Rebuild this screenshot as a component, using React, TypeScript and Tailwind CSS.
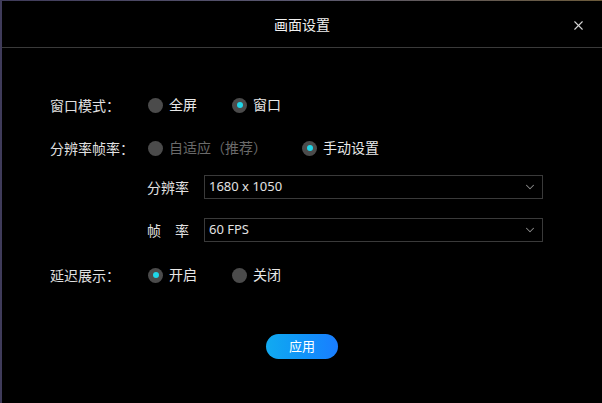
import { ChevronDown, X } from 'lucide-react';

const font = { fontFamily: '"Noto Sans", "Noto Sans CJK SC", sans-serif' };

function Radio({ checked, disabled, label, width }: { checked?: boolean; disabled?: boolean; label: string; width: string }) {
  return (
    <div className={`flex items-center ${width}`}>
      <span className="flex h-[15px] w-[15px] items-center justify-center rounded-full bg-[#4b4b4b]">
        {checked && <span className="h-[6px] w-[6px] rounded-full bg-[#1fd6e8]" />}
      </span>
      <span className={`ml-[6px] text-[14px] leading-none ${disabled ? 'text-[#6a6a6a]' : 'text-[#e8e8e8]'}`}>{label}</span>
    </div>
  );
}

function Select({ value }: { value: string }) {
  return (
    <div className="flex h-[24px] w-[339px] items-center justify-between border border-[#3a3a3a] bg-black pl-[4px] pr-[5px]">
      <span className="text-[13px] text-[#e2e2e2]">{value}</span>
      <ChevronDown size={14} strokeWidth={1.75} className="text-[#8c8c8c]" />
    </div>
  );
}

export default function App() {
  return (
    <div className="h-[403px] w-[602px] bg-gradient-to-r from-[#3f3b5a] via-[#5a5870] to-[#6b5a3a] pl-[2px] pt-px" style={font}>
      <div className="flex h-[402px] flex-col bg-black">
        {/* Header */}
        <div className="relative flex h-[47px] items-center justify-center border-b border-[#3a3a3a]">
          <span className="text-[14px] text-[#f0f0f0]">画面设置</span>
          <X size={15} strokeWidth={1.75} className="absolute right-[16px] top-[17px] text-[#d4d4d4]" />
        </div>

        <div className="flex flex-col pl-[48px] pt-[47px]">
          <div className="flex h-[20px] items-center">
            <span className="w-[98px] text-[14px] text-[#e0e0e0]">窗口模式：</span>
            <Radio label="全屏" width="w-[84px]" />
            <Radio checked label="窗口" width="w-[84px]" />
          </div>

          <div className="mt-[23px] flex h-[20px] items-center">
            <span className="w-[98px] text-[14px] text-[#e0e0e0]">分辨率帧率：</span>
            <Radio disabled label="自适应（推荐）" width="w-[154px]" />
            <Radio checked label="手动设置" width="w-[120px]" />
          </div>

          <div className="mt-[17px] flex items-center pl-[97px]">
            <span className="w-[57px] text-[14px] text-[#e0e0e0]">分辨率</span>
            <Select value="1680 x 1050" />
          </div>

          <div className="mt-[19px] flex items-center pl-[97px]">
            <span className="w-[57px] text-[14px] text-[#e0e0e0]">
              帧<span className="ml-[14px]">率</span>
            </span>
            <Select value="60 FPS" />
          </div>

          <div className="mt-[23px] flex h-[20px] items-center">
            <span className="w-[98px] text-[14px] text-[#e0e0e0]">延迟展示：</span>
            <Radio checked label="开启" width="w-[84px]" />
            <Radio label="关闭" width="w-[84px]" />
          </div>
        </div>

        <div className="mt-[49px] flex justify-center">
          <button className="h-[25px] w-[72px] rounded-full bg-gradient-to-r from-[#12aaf0] to-[#1a7dff] text-[13px] text-white">
            应用
          </button>
        </div>
      </div>
    </div>
  );
}
